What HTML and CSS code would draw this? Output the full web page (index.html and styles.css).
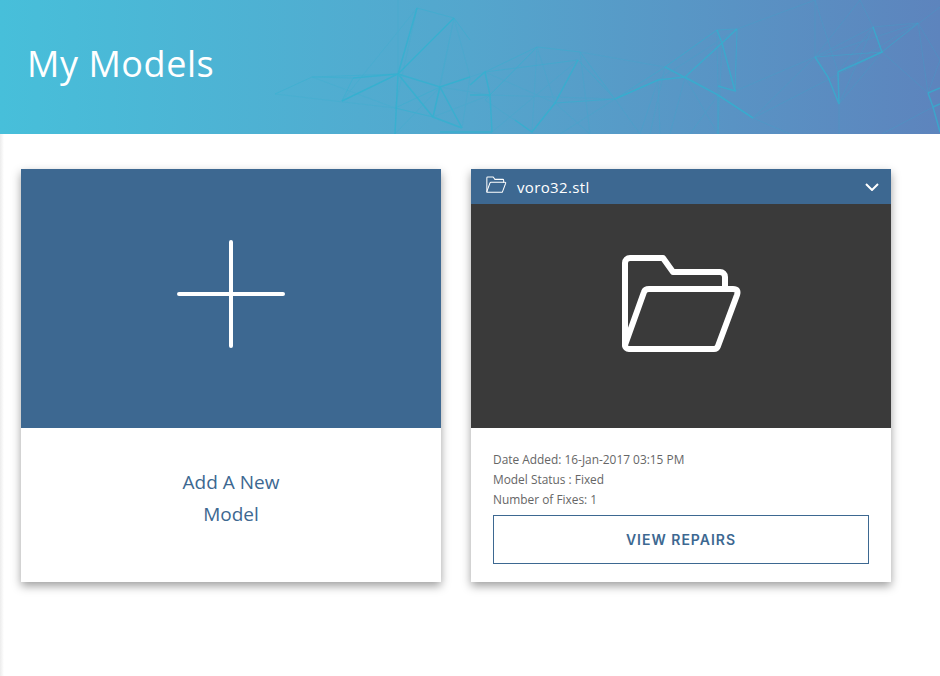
FILE: index.html
```html
<!DOCTYPE html>
<html lang="en">

<head>
    <meta charset="UTF-8">
    <meta name="viewport" content="width=device-width, initial-scale=1.0">
    <title>My Models</title>
    <link rel="stylesheet" href="styles.css">
</head>

<body>
    <svg class="icon-defs" width="0" height="0">
        <symbol id="folder-open" viewBox="0 0 125 105">
            <path d="M5 92V10a5 5 0 0 1 5-5H43L53 19H100a5 5 0 0 1 5 5V36" />
            <path d="M5 92a4 4 0 0 0 4 4H94q3 0 4-3L117 42q2-6-4-6H29q-4 0-5 3L5 92Z" />
        </symbol>
    </svg>

    <!-- Page banner -->
    <header class="banner">
        <svg class="banner-mesh" viewBox="0 0 940 134" width="940" height="134">
            <g class="mesh-faint">
                <path d="M275 94L395 108L433 117M312 77L395 108M342 101L417 8M398 74L398 0M417 8L395 108M454 18L433 117" />
                <path d="M454 18L470 77L485 72M454 18L440 87M470 77L462 128M395 134L440 87M440 87L490 95M433 117L490 95" />
                <path d="M485 72L555 103M490 95L615 99M537 47L532 132M537 47L555 103M537 47L490 95M578 60L492 132M580 52L590 134" />
                <path d="M485 100L532 132L555 103L590 134M555 103L615 99M615 99L560 134M580 52L665 67M615 99L640 134" />
                <path d="M658 80L640 134M658 80L660 134M665 67L650 134M685 77L718 134M685 77L670 134M718 95L718 134M718 95L690 134" />
                <path d="M665 67L717 30M658 80L737 29M737 29L735 91M717 30L718 95M737 29L815 0M722 43L718 134M753 118L790 134" />
                <path d="M753 118L815 57M735 91L815 57M753 118L882 52M815 57L815 0M815 57L860 0M815 57L873 27M815 57L918 23" />
                <path d="M838 72L873 27M838 72L918 23M838 72L815 0M839 104L873 27M839 104L839 134M839 104L882 52M882 52L940 7" />
                <path d="M882 52L928 93M918 23L928 93M918 23L940 60M873 27L860 0M873 27L918 23M928 93L940 60M933 107L882 134" />
            </g>
            <g class="mesh-thin">
                <path d="M275 94L312 77L398 74M312 77L353 78L342 101M342 101L398 74M417 8L454 18L398 74M454 18L470 40" />
                <path d="M395 108L440 87L470 77M395 108L433 117M485 72L537 47L580 52L615 99L665 67M485 72L578 60" />
                <path d="M537 47L485 100M555 103L615 99L658 80M578 60L615 99M918 23L882 52M815 57L882 52" />
                <path d="M717 30L737 29L735 91M665 67L717 30M753 118L718 95L718 134" />
            </g>
            <g class="mesh-bold">
                <path d="M417 8L398 74M454 18L398 74L342 101M353 78L398 74L440 87L470 77M398 74L395 134" />
                <path d="M398 74L433 117L462 128M440 87L433 117M440 87L462 128M470 85L485 72L490 95L492 132M470 95L490 95" />
                <path d="M440 132L492 132M578 60L555 103L532 132L515 120" />
                <path d="M615 99L658 80L685 77L718 95L753 118M665 67L718 95M685 77L722 43L717 30M737 29L722 43L735 91L718 86" />
                <path d="M815 57L828 77L839 104M838 72L882 52L873 27M838 72L839 104" />
                <path d="M928 93L933 107L940 132M928 93L940 88M933 107L940 104" />
            </g>
        </svg>
        <h1 class="banner-title">My Models</h1>
    </header>

    <main class="model-grid">
        <!-- Add card -->
        <section class="card">
            <div class="add-cover">
                <svg class="plus-icon" viewBox="0 0 108 108" width="108" height="108">
                    <path d="M2 54H106M54 2V106" />
                </svg>
            </div>
            <div class="add-label">Add A New<br>Model</div>
        </section>

        <!-- Model card -->
        <section class="card">
            <div class="card-head">
                <svg class="folder folder-small" width="21" height="18"><use href="#folder-open" /></svg>
                <span class="file-name">voro32.stl</span>
                <svg class="chevron" viewBox="0 0 14 8" width="14" height="8">
                    <path d="M1 1L7 7L13 1" />
                </svg>
            </div>
            <div class="model-cover">
                <svg class="folder folder-large" width="125" height="105"><use href="#folder-open" /></svg>
            </div>
            <div class="model-info">
                <p>Date Added: 16-Jan-2017 03:15 PM</p>
                <p>Model Status : Fixed</p>
                <p>Number of Fixes: 1</p>
                <a class="repairs-btn" href="#">VIEW REPAIRS</a>
            </div>
        </section>
    </main>
</body>

</html>
```

FILE: styles.css
```css
/* General */

html,
body {
    height: 100%;
}

body {
    margin: 0;
    background: #fff;
    color: #666;
    font-family: 'Open Sans', 'Noto Sans', sans-serif;
    overflow: hidden;
}

.icon-defs {
    display: block;
}

/* Banner */

.banner {
    position: relative;
    display: flex;
    align-items: center;
    height: 134px;
    padding: 0 0 7px 27px;
    box-sizing: border-box;
    background: linear-gradient(to right, #47bfda, #54a6cd 50%, #5d84bd);
    overflow: hidden;
}

.banner-mesh {
    position: absolute;
    top: 0;
    left: 0;
    fill: none;
    stroke: #30b2d0;
    filter: blur(0.4px);
}

.mesh-faint {
    stroke-width: 0.7;
    opacity: 0.3;
}

.mesh-thin {
    stroke-width: 1;
    opacity: 0.4;
}

.mesh-bold {
    stroke-width: 1.5;
    opacity: 0.7;
}

.banner-title {
    position: relative;
    margin: 0;
    color: #fff;
    font-size: 36px;
    font-weight: 400;
    letter-spacing: 0.55px;
}

/* Cards */

.model-grid {
    display: flex;
    gap: 30px;
    height: calc(100% - 134px);
    padding: 35px 21px;
    box-sizing: border-box;
    background: linear-gradient(to right, #ececec, #fff 4px);
}

.card {
    display: flex;
    flex-direction: column;
    width: 420px;
    height: 413px;
    background: #fff;
    box-shadow: 0 4px 9px rgba(0, 0, 0, 0.38);
}

.add-cover {
    display: flex;
    justify-content: center;
    align-items: center;
    height: 259px;
    padding-bottom: 9px;
    box-sizing: border-box;
    background: #3d6891;
}

.plus-icon path {
    fill: none;
    stroke: #fff;
    stroke-width: 4;
    stroke-linecap: round;
}

.add-label {
    padding-top: 38px;
    color: #3d6891;
    font-size: 19px;
    line-height: 32px;
    text-align: center;
}

.card-head {
    display: flex;
    align-items: center;
    height: 35px;
    padding: 0 12px 0 15px;
    box-sizing: border-box;
    background: #3d6891;
    color: #fff;
}

.file-name {
    flex: 1;
    margin-left: 10px;
    font-size: 15px;
    letter-spacing: 0.35px;
}

.folder {
    fill: none;
    stroke: #fff;
    stroke-width: 6;
    stroke-linejoin: round;
    stroke-linecap: round;
}

.folder-small {
    margin-top: -3px;
}

.folder-large {
    margin-left: 2px;
    margin-top: 1px;
}

.chevron path {
    fill: none;
    stroke: #fff;
    stroke-width: 2;
}

.model-cover {
    display: flex;
    justify-content: center;
    align-items: center;
    height: 224px;
    padding-bottom: 22px;
    box-sizing: border-box;
    background: #3a3a3a;
}

.model-info {
    padding: 21px 22px 0;
}

.model-info p {
    margin: 0;
    font-size: 11.9px;
    line-height: 20px;
}

.repairs-btn {
    display: block;
    height: 49px;
    margin-top: 6px;
    border: 1px solid #3d6891;
    box-sizing: border-box;
    color: #3d6891;
    font-family: 'Inter', sans-serif;
    font-size: 14px;
    font-weight: 600;
    letter-spacing: 1px;
    line-height: 47px;
    text-align: center;
    text-decoration: none;
}
```
